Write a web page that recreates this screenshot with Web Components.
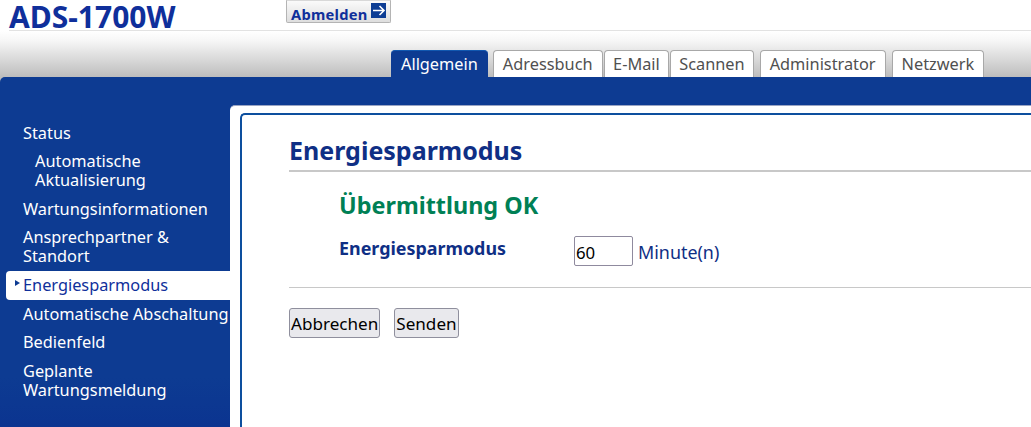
<!DOCTYPE html>
<html lang="de">
<head>
<meta charset="utf-8">
<title>ADS-1700W</title>
<style>
html, body { margin: 0; height: 100%; overflow: hidden; background: #fff; }
body { font-family: "Noto Sans", sans-serif; }
</style>
</head>
<body>
<printer-page></printer-page>
<script>
class PrinterHeader extends HTMLElement {
    constructor() {
        super();
        this.attachShadow({ mode: 'open' });
        this.shadowRoot.innerHTML = `
        <style>
            :host { display: block; height: 31px; background: #fff; padding-left: 9px; }
            .row { display: flex; height: 30px; border-bottom: 1px solid #e2e2e2; }
            h1 { margin: 0; width: 277px; font-size: 30px; line-height: 33px; height: 30px; font-weight: 700; color: #0f2f9b; white-space: nowrap; }
            .logout { box-sizing: border-box; height: 23px; width: 105px; display: flex; align-items: flex-end; padding: 0 0 0 4px; gap: 3px;
                border: 1px solid #b4b4b4; border-top-color: #d8d8d8; border-radius: 0 0 2px 2px; background: linear-gradient(#fafafa, #dedede); }
            .logout span { font-size: 14.7px; font-weight: 700; color: #0f2f9b; line-height: 15px; letter-spacing: .25px; white-space: nowrap; }
            svg { display: block; margin-bottom: 4px; }
        </style>
        <div class="row">
            <h1>ADS-1700W</h1>
            <div class="logout"><span>Abmelden</span>
                <svg width="15" height="15" viewBox="0 0 15 15"><rect width="15" height="15" fill="#0d3d94"/><path d="M2 7.5H12.5M8.5 3l4.5 4.5L8.5 12" fill="none" stroke="#fff" stroke-width="1.6"/></svg>
            </div>
        </div>`;
    }
}

class PrinterTabs extends HTMLElement {
    constructor() {
        super();
        this.attachShadow({ mode: 'open' });
        this.shadowRoot.innerHTML = `
        <style>
            :host { display: flex; align-items: flex-end; height: 46px; box-sizing: border-box; padding-left: 391px; background: linear-gradient(#ffffff 0, #f6f6f6 10px, #bdbdbd 100%); }
            slot { display: contents; }
        </style>
        <slot></slot>`;
    }
}

class PrinterTab extends HTMLElement {
    constructor() {
        super();
        this.attachShadow({ mode: 'open' });
        this.shadowRoot.innerHTML = `
        <style>
            :host { display: block; box-sizing: border-box; height: 27px; margin-right: var(--gap, 1px); padding: 0 var(--pad, 9px); font-size: 16.32px; line-height: 27px; color: #505050; background: #fff; border: 1px solid #a8a8a8; border-bottom: 0; border-radius: 4px 4px 0 0; white-space: nowrap; }
            :host([active]) { height: 27px; color: #fff; background: #0d3b92; border: 0; border-top: 1px solid #1258b0; line-height: 26px; padding: 0 10px; }
        </style>
        <slot></slot>`;
    }
}

class SideNav extends HTMLElement {
    constructor() {
        super();
        this.attachShadow({ mode: 'open' });
        this.shadowRoot.innerHTML = `
        <style>
            :host { display: flex; flex-direction: column; width: 224px; flex: none; padding: 41.9px 0 0 6px; }
        </style>
        <slot></slot>`;
    }
}

class NavItem extends HTMLElement {
    constructor() {
        super();
        this.attachShadow({ mode: 'open' });
        this.shadowRoot.innerHTML = `
        <style>
            :host { display: block; position: relative; padding: 5px 0 4.5px 17px; font-size: 16.32px; line-height: 19px; color: #fff; white-space: nowrap; }
            :host([sub]) { padding-left: 29px; }
            :host([active]) { padding-bottom: 5px; color: #0f2f9b; background: #fff; border-radius: 4px 0 0 4px; }
            :host([active])::before { content: ""; position: absolute; left: 9px; top: 9px; border-left: 5px solid #0d3b92; border-top: 3px solid transparent; border-bottom: 3px solid transparent; }
        </style>
        <slot></slot>`;
    }
}

class EnergyForm extends HTMLElement {
    constructor() {
        super();
        this.attachShadow({ mode: 'open' });
        this.shadowRoot.innerHTML = `
        <style>
            :host { display: block; box-sizing: border-box; height: 100%; padding: 0 0 0 47px; background: #fff; border-top: 2px solid #0d4f9e; border-left: 2px solid #0d4f9e; border-top-left-radius: 5px; }
            h2 { margin: 19px 0 0; height: 38px; box-sizing: border-box; font-size: 25px; line-height: 32px; font-weight: 700; color: #0f2f85; border-bottom: 2px solid #c8c8c8; }
            .ok { margin: 16px 0 0 50px; font-size: 23.4px; line-height: 34px; font-weight: 700; color: #008055; }
            .field { display: flex; margin: 14px 0 0 50px; color: #0f2f85; }
            label { width: 235px; font-size: 17.9px; line-height: 24px; font-weight: 700; }
            .input { box-sizing: border-box; width: 59px; height: 30px; padding: 0 0 0 1px; font: 16.8px/31px "Noto Sans", sans-serif; color: #000; border: 1px solid #8f8a9e; border-radius: 2px; background: #fff; }
            .unit { margin-left: 5px; font-size: 17.9px; line-height: 33px; }
            hr { margin: 18px 0 0; border: 0; border-top: 1px solid #c8c8c8; }
            .buttons { display: flex; gap: 14px; margin-top: 20px; }
            button { box-sizing: border-box; height: 30px; padding: 0 1px; font: 17.1px "Noto Sans", sans-serif; color: #000; background: #e9e9ed; border: 1px solid #8f8f9d; border-radius: 3px; }
        </style>
        <h2>Energiesparmodus</h2>
        <div class="ok">Übermittlung OK</div>
        <div class="field">
            <label>Energiesparmodus</label>
            <div class="input">60</div>
            <span class="unit">Minute(n)</span>
        </div>
        <hr>
        <div class="buttons"><button>Abbrechen</button><button>Senden</button></div>`;
    }
}

class PrinterPage extends HTMLElement {
    constructor() {
        super();
        this.attachShadow({ mode: 'open' });
        this.shadowRoot.innerHTML = `
        <style>
            :host { display: block; height: 427px; overflow: hidden; }
            .panel { display: flex; height: 350px; background: linear-gradient(#0d3b92, #0d3b92 300px, #0b3490); border-radius: 5px 0 0 0; background-color: #0d3b92; }
            .gradient-back { background: #bdbdbd; }
            .content { flex: 1; margin-top: 28px; padding: 7px 0 0 10px; background: #fff; border-top: 1px solid #9aa5c4; border-radius: 5px 0 0 0; min-width: 0; }
        </style>
        <printer-header></printer-header>
        <printer-tabs>
            <printer-tab active style="--gap:5px">Allgemein</printer-tab>
            <printer-tab>Adressbuch</printer-tab>
            <printer-tab style="--pad:8.5px">E-Mail</printer-tab>
            <printer-tab style="--gap:6px;--pad:8px">Scannen</printer-tab>
            <printer-tab style="--gap:6px">Administrator</printer-tab>
            <printer-tab>Netzwerk</printer-tab>
        </printer-tabs>
        <div class="gradient-back"><div class="panel">
            <side-nav>
                <nav-item>Status</nav-item>
                <nav-item sub>Automatische<br>Aktualisierung</nav-item>
                <nav-item>Wartungsinformationen</nav-item>
                <nav-item>Ansprechpartner &amp;<br>Standort</nav-item>
                <nav-item active>Energiesparmodus</nav-item>
                <nav-item>Automatische Abschaltung</nav-item>
                <nav-item>Bedienfeld</nav-item>
                <nav-item>Geplante<br>Wartungsmeldung</nav-item>
            </side-nav>
            <div class="content"><energy-form></energy-form></div>
        </div></div>`;
    }
}

customElements.define('printer-header', PrinterHeader);
customElements.define('printer-tabs', PrinterTabs);
customElements.define('printer-tab', PrinterTab);
customElements.define('side-nav', SideNav);
customElements.define('nav-item', NavItem);
customElements.define('energy-form', EnergyForm);
customElements.define('printer-page', PrinterPage);
</script>
</body>
</html>
